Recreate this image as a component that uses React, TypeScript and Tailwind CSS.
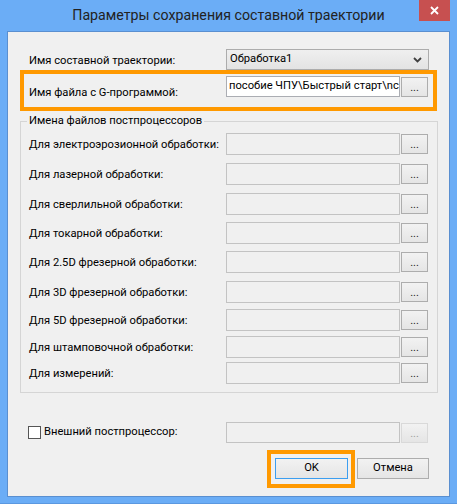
const FONT = "font-['Roboto','Noto_Sans',sans-serif]"

const rows: { label: string; gap: string }[] = [
  { label: "Для электроэрозионной обработки:", gap: "mt-[11px]" },
  { label: "Для лазерной обработки:", gap: "mt-[8px]" },
  { label: "Для сверлильной обработки:", gap: "mt-[8px]" },
  { label: "Для токарной обработки:", gap: "mt-[7px]" },
  { label: "Для 2.5D фрезерной обработки:", gap: "mt-[7px]" },
  { label: "Для 3D фрезерной обработки:", gap: "mt-[8px]" },
  { label: "Для 5D фрезерной обработки:", gap: "mt-[6px]" },
  { label: "Для штамповочной обработки:", gap: "mt-[5px]" },
  { label: "Для измерений:", gap: "mt-[4px]" },
]

function BrowseButton({ disabled = false }: { disabled?: boolean }) {
  return (
    <div
      className={`ml-[1px] w-[27px] h-[20px] flex items-end justify-center pb-[3px] text-[11px] leading-none border bg-gradient-to-b from-[#f2f2f2] to-[#e5e5e5] ${
        disabled ? "border-[#d9d9d9] text-[#a0a0a0]" : "border-[#adadad] text-[#222]"
      }`}
    >
      ...
    </div>
  )
}

function PathField() {
  return (
    <div className="flex items-center">
      <div className="w-[174px] h-[22px] border border-[#c3c3c3] bg-[#f0f0f0]" />
      <BrowseButton />
    </div>
  )
}

export default function App() {
  return (
    <div className={`w-[457px] h-[504px] bg-[#6badf6] border-b border-[#5b98e0] flex flex-col relative ${FONT} text-[11.2px] text-black whitespace-nowrap`}>
      {/* title bar */}
      <div className="h-[31px] flex items-center justify-center text-[14.2px] text-[#222] pt-[1px]">
        Параметры сохранения составной траектории
      </div>
      <div className="absolute top-0 right-[7px] w-[31px] h-[21px] bg-[#c75050] flex items-center justify-center">
        <svg width="9" height="9" viewBox="0 0 9 9">
          <path d="M1 1 L8 8 M8 1 L1 8" stroke="#fff" strokeWidth="1.8" />
        </svg>
      </div>

      {/* client area */}
      <div className="mx-[7px] flex-1 border border-[#5a8fd0] bg-[#f0f0f0] flex flex-col">
        {/* trajectory name */}
        <div className="mt-[17px] flex items-center h-[21px]">
          <div className="w-[218px] pl-[21px] pt-[4px]">Имя составной траектории:</div>
          <div className="w-[203px] h-[21px] border border-[#acacac] bg-gradient-to-b from-[#efefef] to-[#e3e3e3] flex items-center justify-between pl-[3px] pr-[6px]">
            <span>Обработка1</span>
            <svg width="9" height="6" viewBox="0 0 9 6">
              <path d="M1 1 L4.5 4.5 L8 1" stroke="#404040" strokeWidth="1.8" fill="none" />
            </svg>
          </div>
        </div>

        {/* G-program file (highlighted) */}
        <div className="ml-[12px] w-[417px] h-[41px] border-4 border-[#ff9900] flex items-start pt-[2px]">
          <div className="w-[202px] pl-[5px] pt-[9px]">Имя файла с G-программой:</div>
          <div className="flex items-center">
            <div className="w-[174px] h-[21px] border border-[#abadb3] bg-white flex items-center pl-[2px] overflow-hidden">
              <span>пособие ЧПУ\Быстрый старт\nc</span>
              <span className="w-px h-[14px] bg-black ml-px shrink-0" />
            </div>
            <BrowseButton />
          </div>
        </div>

        {/* postprocessor group */}
        <div className="mt-[10px] ml-[12px] w-[418px] h-[272px] border border-[#d5d5d5] relative flex flex-col">
          <span className="absolute -top-[9px] left-[6px] px-[2px] bg-[#f0f0f0]">Имена файлов постпроцессоров</span>
          {rows.map(r => (
            <div key={r.label} className={`${r.gap} flex items-center h-[22px]`}>
              <div className="w-[205px] pl-[8px] pt-[3px]">{r.label}</div>
              <PathField />
            </div>
          ))}
        </div>

        {/* external postprocessor */}
        <div className="mt-[29px] flex items-center h-[21px]">
          <div className="w-[218px] pl-[20px] flex items-center">
            <div className="w-[13px] h-[13px] border border-[#555] bg-white" />
            <span className="ml-[3px]">Внешний постпроцессор:</span>
          </div>
          <div className="w-[174px] h-[21px] border border-[#c3c3c3] bg-[#f0f0f0]" />
          <BrowseButton disabled />
        </div>

        {/* dialog buttons */}
        <div className="mt-[7px] flex items-start">
          <div className="ml-[259px] w-[88px] h-[38px] border-4 border-[#ff9900] pl-[4px] pt-[4px]">
            <div className="w-[73px] h-[21px] border border-[#3c9ef0] bg-gradient-to-b from-[#f2f2f2] to-[#e5e5e5] flex items-center justify-center">
              OK
            </div>
          </div>
          <div className="ml-[2px] mt-[8px] w-[72px] h-[21px] border border-[#adadad] bg-gradient-to-b from-[#f2f2f2] to-[#e5e5e5] flex items-center justify-center">
            Отмена
          </div>
        </div>
      </div>
      <div className="h-[6px]" />
    </div>
  )
}
